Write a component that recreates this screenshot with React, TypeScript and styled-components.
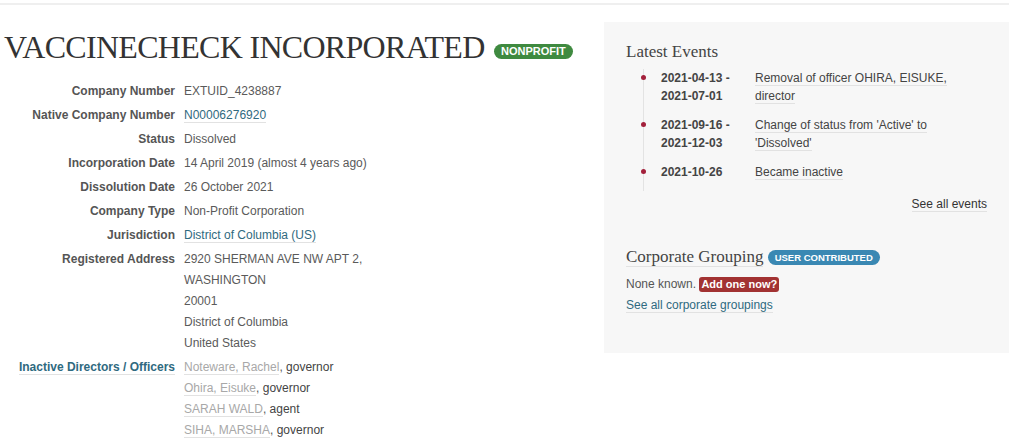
import styled, { createGlobalStyle } from 'styled-components';

const GlobalStyle = createGlobalStyle`
  body {
    margin: 0;
    background: #fff;
    font-family: "Liberation Sans", Arial, sans-serif;
    color: #555;
  }
`;

type Tone = 'green' | 'blue' | 'red';

const toneColors: Record<Tone, string> = {
  green: '#3f8a40',
  blue: '#3a88b3',
  red: '#a23232',
};

const facts: { label: string; lines: string[]; link?: boolean }[] = [
  { label: 'Company Number', lines: ['EXTUID_4238887'] },
  { label: 'Native Company Number', lines: ['N00006276920'], link: true },
  { label: 'Status', lines: ['Dissolved'] },
  { label: 'Incorporation Date', lines: ['14 April 2019 (almost 4 years ago)'] },
  { label: 'Dissolution Date', lines: ['26 October 2021'] },
  { label: 'Company Type', lines: ['Non-Profit Corporation'] },
  { label: 'Jurisdiction', lines: ['District of Columbia (US)'], link: true },
  {
    label: 'Registered Address',
    lines: ['2920 SHERMAN AVE NW APT 2,', 'WASHINGTON', '20001', 'District of Columbia', 'United States'],
  },
];

const officers = [
  { name: 'Noteware, Rachel', role: 'governor' },
  { name: 'Ohira, Eisuke', role: 'governor' },
  { name: 'SARAH WALD', role: 'agent' },
  { name: 'SIHA, MARSHA', role: 'governor' },
];

const events = [
  { date: '2021-04-13 - 2021-07-01', text: 'Removal of officer OHIRA, EISUKE, director' },
  { date: '2021-09-16 - 2021-12-03', text: "Change of status from 'Active' to 'Dissolved'" },
  { date: '2021-10-26', text: 'Became inactive' },
];

export default function App() {
  return (
    <S.Page>
      <GlobalStyle />
      <S.TopRule />
      <S.Columns>
        <S.Main>
          <S.Title>
            VACCINECHECK INCORPORATED <S.Badge $tone="green">NONPROFIT</S.Badge>
          </S.Title>
          <S.InfoList>
            {facts.map((f) => (
              <S.Row key={f.label}>
                <S.Term>{f.label}</S.Term>
                <S.Detail>
                  {f.lines.map((l) => (
                    <S.Line key={l}>{f.link ? <S.Link>{l}</S.Link> : l}</S.Line>
                  ))}
                </S.Detail>
              </S.Row>
            ))}
            <S.Row>
              <S.Term>
                <S.Link $strong>Inactive Directors / Officers</S.Link>
              </S.Term>
              <S.Detail>
                {officers.map((o) => (
                  <S.Line key={o.name}>
                    <S.Link $muted>{o.name}</S.Link>, <S.Role>{o.role}</S.Role>
                  </S.Line>
                ))}
              </S.Detail>
            </S.Row>
          </S.InfoList>
        </S.Main>

        <S.Sidebar>
          <S.SectionTitle>Latest Events</S.SectionTitle>
          <S.Events>
            {events.map((e) => (
              <S.Event key={e.date}>
                <S.EventDate>{e.date}</S.EventDate>
                <S.EventText>
                  <S.Underlined>{e.text}</S.Underlined>
                </S.EventText>
              </S.Event>
            ))}
          </S.Events>
          <S.More>
            <S.Underlined>See all events</S.Underlined>
          </S.More>

          <S.SectionTitle $spaced>
            <S.Underlined>Corporate Grouping</S.Underlined> <S.Badge $tone="blue">USER CONTRIBUTED</S.Badge>
          </S.SectionTitle>
          <S.Para>
            None known. <S.Button>Add one now?</S.Button>
          </S.Para>
          <S.Para>
            <S.Link>See all corporate groupings</S.Link>
          </S.Para>
        </S.Sidebar>
      </S.Columns>
    </S.Page>
  );
}

const S = {
  Page: styled.div`
    width: 1009px;
  `,
  TopRule: styled.div`
    height: 2px;
    margin-top: 3px;
    background: #efefef;
  `,
  Columns: styled.div`
    display: grid;
    grid-template-columns: 600px 405px;
    gap: 4px;
    align-items: start;
  `,
  Main: styled.main`
    padding-left: 4px;
  `,
  Title: styled.h1`
    margin: 22px 0 0;
    font-family: "Liberation Serif", "Times New Roman", serif;
    font-weight: normal;
    font-size: 32px;
    line-height: 40px;
    letter-spacing: -0.7px;
    color: #333;
    white-space: nowrap;
  `,
  Badge: styled.span<{ $tone: Tone }>`
    display: inline-block;
    margin-left: ${(p) => (p.$tone === 'green' ? '2px' : '0')};
    padding: 0 7px;
    border-radius: 8px;
    background: ${(p) => toneColors[p.$tone]};
    color: #fff;
    font-family: "Liberation Sans", Arial, sans-serif;
    font-weight: bold;
    font-size: ${(p) => (p.$tone === 'green' ? '11px' : '9.5px')};
    line-height: 15px;
    letter-spacing: 0;
    vertical-align: ${(p) => (p.$tone === 'green' ? '3px' : '1px')};
  `,
  InfoList: styled.dl`
    display: grid;
    row-gap: 3px;
    margin: 14px 0 0;
    font-size: 12px;
    line-height: 21px;
  `,
  Row: styled.div`
    display: grid;
    grid-template-columns: 171px 1fr;
    column-gap: 9px;
  `,
  Term: styled.dt`
    text-align: right;
    font-weight: bold;
    color: #555;
  `,
  Detail: styled.dd`
    margin: 0;
    color: #5a5a5a;
  `,
  Line: styled.span`
    display: block;
  `,
  Link: styled.a<{ $muted?: boolean; $strong?: boolean }>`
    color: ${(p) => (p.$muted ? '#a8a8a8' : '#2f6a80')};
    font-weight: ${(p) => (p.$strong ? 'bold' : 'normal')};
    text-decoration: none;
    border-bottom: 1px solid #e2e2e2;
    cursor: pointer;
  `,
  Role: styled.span`
    color: #444;
  `,
  Sidebar: styled.aside`
    margin-top: 17px;
    padding: 17px 22px 37px;
    background: #f7f7f7;
    font-size: 12px;
  `,
  SectionTitle: styled.h3<{ $spaced?: boolean }>`
    margin: ${(p) => (p.$spaced ? '32px' : '1px')} 0 0;
    font-family: "Liberation Serif", "Times New Roman", serif;
    font-weight: normal;
    font-size: 17px;
    line-height: 24px;
    color: #444;
  `,
  Events: styled.ul`
    list-style: none;
    margin: 5px 0 0 17px;
    padding: 0 0 10px 17px;
    border-left: 1px solid #e3e3e3;
  `,
  Event: styled.li`
    position: relative;
    display: grid;
    grid-template-columns: 94px 215px;
    margin-bottom: 11px;
    line-height: 18px;
    &:last-child {
      margin-bottom: 0;
    }
    &::before {
      content: '';
      position: absolute;
      left: -20px;
      top: 6px;
      width: 5px;
      height: 5px;
      border-radius: 50%;
      background: #a3203b;
    }
  `,
  EventDate: styled.span`
    font-weight: bold;
    color: #444;
  `,
  EventText: styled.span`
    color: #444;
  `,
  Underlined: styled.span`
    border-bottom: 1px solid #e2e2e2;
  `,
  More: styled.div`
    margin-top: 4px;
    text-align: right;
    line-height: 18px;
    color: #333;
  `,
  Para: styled.p`
    margin: 0;
    line-height: 21px;
    color: #555;
    &:first-of-type {
      margin-top: 5px;
    }
  `,
  Button: styled.span`
    display: inline-block;
    padding: 0 2px;
    border-radius: 3px;
    background: ${toneColors.red};
    color: #fff;
    font-size: 11px;
    font-weight: bold;
    line-height: 15px;
  `,
};
